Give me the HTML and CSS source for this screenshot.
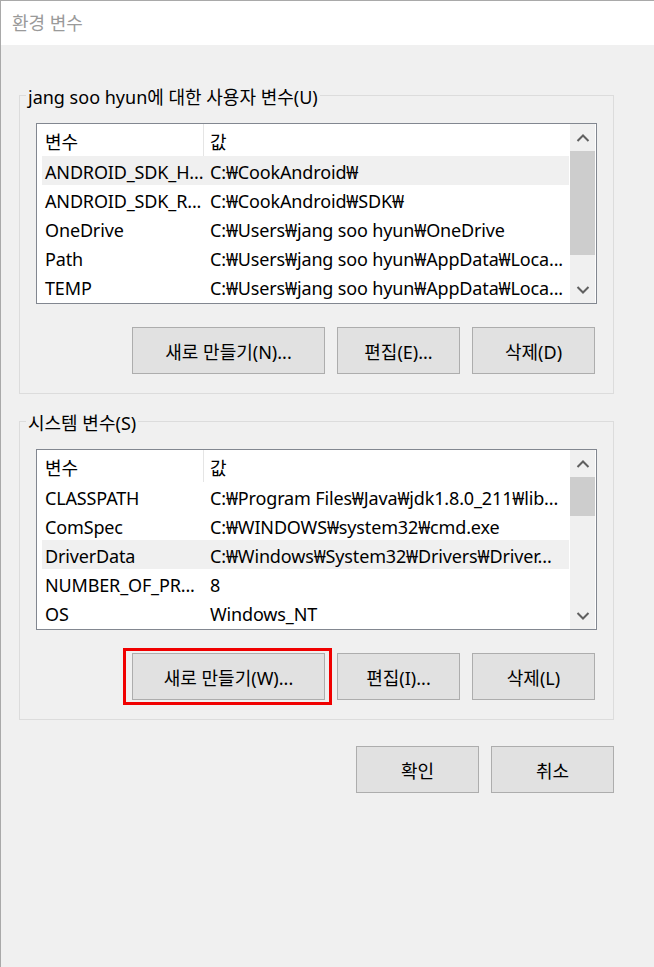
FILE: index.html
```html
<!DOCTYPE html>
<html lang="ko">
<head>
<meta charset="utf-8">
<title>환경 변수</title>
<link rel="stylesheet" href="styles.css">
</head>
<body>
<div class="window">
  <div class="titlebar"><span class="title">환경 변수</span></div>
  <div class="content">
    <fieldset class="group">
      <legend class="legend">jang soo hyun에 대한 사용자 변수(U)</legend>
      <div class="listbox">
        <div class="list">
          <div class="header"><div class="hcell c1">변수</div><div class="hcell c2">값</div></div>
          <div class="row sel"><div class="cell c1">ANDROID_SDK_H...</div><div class="cell c2">C:₩CookAndroid₩</div></div>
          <div class="row"><div class="cell c1">ANDROID_SDK_R...</div><div class="cell c2">C:₩CookAndroid₩SDK₩</div></div>
          <div class="row"><div class="cell c1">OneDrive</div><div class="cell c2">C:₩Users₩jang soo hyun₩OneDrive</div></div>
          <div class="row"><div class="cell c1">Path</div><div class="cell c2">C:₩Users₩jang soo hyun₩AppData₩Loca...</div></div>
          <div class="row"><div class="cell c1">TEMP</div><div class="cell c2">C:₩Users₩jang soo hyun₩AppData₩Loca...</div></div>
        </div>
        <div class="scrollbar">
          <div class="sb-btn"><svg width="14" height="8" viewBox="0 0 14 8"><polyline points="1.5,7 7,1.5 12.5,7" fill="none" stroke="#606060" stroke-width="2"/></svg></div>
          <div class="sb-track"><div class="sb-thumb" style="height:104px"></div></div>
          <div class="sb-btn"><svg width="14" height="8" viewBox="0 0 14 8"><polyline points="1.5,1 7,6.5 12.5,1" fill="none" stroke="#606060" stroke-width="2"/></svg></div>
        </div>
      </div>
      <div class="btnrow">
        <button class="btn btn-wide">새로 만들기(N)...</button>
        <button class="btn">편집(E)...</button>
        <button class="btn">삭제(D)</button>
      </div>
    </fieldset>

    <fieldset class="group group-system">
      <legend class="legend">시스템 변수(S)</legend>
      <div class="listbox">
        <div class="list">
          <div class="header"><div class="hcell c1">변수</div><div class="hcell c2">값</div></div>
          <div class="row"><div class="cell c1">CLASSPATH</div><div class="cell c2">C:₩Program Files₩Java₩jdk1.8.0_211₩lib...</div></div>
          <div class="row"><div class="cell c1">ComSpec</div><div class="cell c2">C:₩WINDOWS₩system32₩cmd.exe</div></div>
          <div class="row sel"><div class="cell c1">DriverData</div><div class="cell c2">C:₩Windows₩System32₩Drivers₩Driver...</div></div>
          <div class="row"><div class="cell c1">NUMBER_OF_PR...</div><div class="cell c2">8</div></div>
          <div class="row"><div class="cell c1">OS</div><div class="cell c2">Windows_NT</div></div>
        </div>
        <div class="scrollbar">
          <div class="sb-btn"><svg width="14" height="8" viewBox="0 0 14 8"><polyline points="1.5,7 7,1.5 12.5,7" fill="none" stroke="#606060" stroke-width="2"/></svg></div>
          <div class="sb-track"><div class="sb-thumb" style="height:39px"></div></div>
          <div class="sb-btn"><svg width="14" height="8" viewBox="0 0 14 8"><polyline points="1.5,1 7,6.5 12.5,1" fill="none" stroke="#606060" stroke-width="2"/></svg></div>
        </div>
      </div>
      <div class="btnrow">
        <button class="btn btn-wide btn-marked">새로 만들기(W)...</button>
        <button class="btn">편집(I)...</button>
        <button class="btn">삭제(L)</button>
      </div>
    </fieldset>

    <div class="dialog-buttons">
      <button class="btn">확인</button>
      <button class="btn">취소</button>
    </div>
  </div>
</div>
</body>
</html>
```

FILE: styles.css
```css
html, body {
  margin: 0;
  padding: 0;
  background: #f0f0f0;
}
body {
  font-family: "Noto Sans", "Noto Sans CJK KR", sans-serif;
  font-size: 18px;
  color: #000;
}
.window {
  border-top: 1px solid #a9a9a9;
  border-left: 1px solid #a9a9a9;
  height: 966px;
  background: #f0f0f0;
}
.titlebar {
  height: 44px;
  background: #fff;
  display: flex;
  align-items: center;
  padding-left: 11px;
}
.title {
  color: #9a9a9a;
  font-size: 18px;
  line-height: 22px;
}
.content {
  padding: 37px 0 0 18px;
}
.group {
  margin: 0;
  padding: 0 16px 19px 16px;
  width: 595px;
  box-sizing: border-box;
  border: 1px solid #dcdcdc;
  min-width: 0;
}
.group-system {
  margin-top: 14px;
}
.legend {
  margin-left: -10px;
  padding: 4px 2px 0 2px;
  font-size: 18px;
  line-height: 22px;
  height: 26px;
  box-sizing: border-box;
}
.listbox {
  margin-top: 15px;
  height: 181px;
  box-sizing: border-box;
  border: 1px solid #828790;
  background: #fff;
  display: flex;
}
.list {
  flex: 1;
  padding-left: 5px;
  overflow: hidden;
}
.header {
  height: 32px;
  display: flex;
}
.hcell {
  height: 32px;
  box-sizing: border-box;
  padding-top: 4px;
  line-height: 28px;
  white-space: nowrap;
}
.hcell.c1 {
  border-right: 1px solid #e5e5e5;
}
.row {
  height: 29px;
  display: flex;
}
.row.sel {
  background: #f0f0f0;
}
.cell {
  white-space: nowrap;
  height: 29px;
  box-sizing: border-box;
  padding-top: 4px;
  line-height: 25px;
  letter-spacing: -0.15px;
}
.c1 {
  width: 162px;
  padding-left: 3px;
  flex: none;
}
.c2 {
  padding-left: 6px;
}
.scrollbar {
  width: 25px;
  margin-left: 1px;
  margin-right: 1px;
  background: #f0f0f0;
  display: flex;
  flex-direction: column;
}
.sb-btn {
  height: 27px;
  display: flex;
  align-items: center;
  justify-content: center;
  flex: none;
}
.sb-track {
  flex: 1;
}
.sb-thumb {
  background: #cdcdcd;
}
.btnrow {
  margin-top: 23px;
  display: flex;
  justify-content: flex-end;
  gap: 12px;
  padding-right: 2px;
}
.btn {
  width: 123px;
  height: 47px;
  box-sizing: border-box;
  background: #e1e1e1;
  border: 1px solid #adadad;
  font-family: "Noto Sans", "Noto Sans CJK KR", sans-serif;
  font-size: 18px;
  color: #000;
  padding: 0;
  margin: 0;
}
.btn-wide {
  width: 193px;
}
.btn-marked {
  position: relative;
}
.btn-marked::after {
  content: "";
  position: absolute;
  top: -6px;
  bottom: -6px;
  left: -10px;
  right: -8px;
  border: 3px solid #f00000;
}
.dialog-buttons {
  width: 595px;
  margin-top: 26px;
  display: flex;
  justify-content: flex-end;
  gap: 12px;
}
```
